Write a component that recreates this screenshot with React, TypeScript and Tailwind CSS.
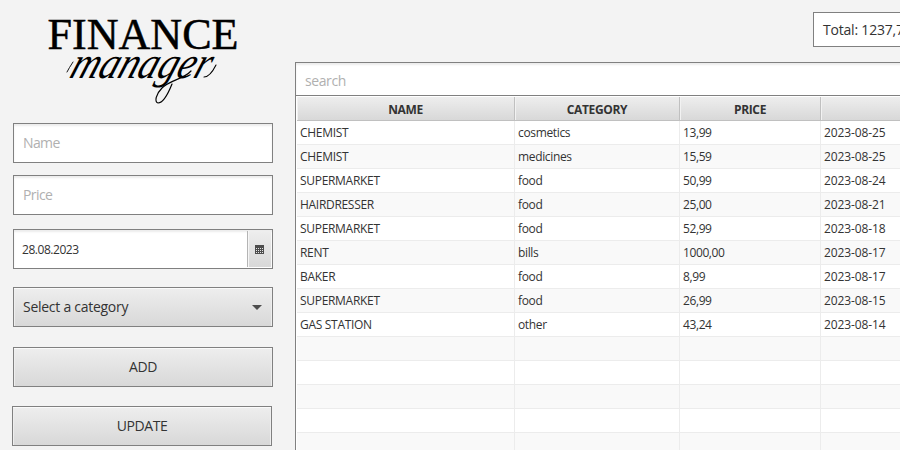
import type { ReactNode } from "react";

const rows = [
  ["CHEMIST", "cosmetics", "13,99", "2023-08-25"],
  ["CHEMIST", "medicines", "15,59", "2023-08-25"],
  ["SUPERMARKET", "food", "50,99", "2023-08-24"],
  ["HAIRDRESSER", "food", "25,00", "2023-08-21"],
  ["SUPERMARKET", "food", "52,99", "2023-08-18"],
  ["RENT", "bills", "1000,00", "2023-08-17"],
  ["BAKER", "food", "8,99", "2023-08-17"],
  ["SUPERMARKET", "food", "26,99", "2023-08-15"],
  ["GAS STATION", "other", "43,24", "2023-08-14"],
  ["", "", "", ""],
  ["", "", "", ""],
  ["", "", "", ""],
  ["", "", "", ""],
  ["", "", "", ""],
];

const grid = "grid grid-cols-[218px_165px_141px_218px]";
const inputBox =
  "flex h-10 w-[260px] items-center border border-[#808080] bg-white px-[9px] pb-0.5 text-[14px] tracking-[-0.6px] text-[#b0b0b0] shadow-[inset_0_2px_2px_#ededed]";
const buttonFace =
  "border border-[#808080] bg-gradient-to-b from-[#eeeeee] to-[#d8d8d8] shadow-[inset_0_1px_0_#fafafa,inset_1px_0_0_#eeeeee,inset_-1px_0_0_#eeeeee]";

function Logo() {
  return (
    <svg className="ml-[35px] block h-[111px] w-[190px]" viewBox="48 0 190 111" overflow="visible">
      <text x="47.5" y="49" fontSize="44" textLength="191" lengthAdjust="spacingAndGlyphs" fontFamily="'Liberation Serif', serif" stroke="#000" strokeWidth="0.5">
        FINANCE
      </text>
      <g transform="translate(68 78) skewX(-20)">
        <text x="0" y="0" fontSize="45" textLength="139" lengthAdjust="spacingAndGlyphs" fontFamily="'Liberation Serif', serif" fontStyle="italic">
          manager
        </text>
      </g>
      {/* Hairline swashes around the script line */}
      <g fill="none" stroke="#000" strokeLinecap="round">
        <path d="M67 72q2-4 6-10" strokeWidth="0.9" />
        <path d="M172 84C168 94 163 103 158 103C154 102 156 94 162 88C170 80 184 79 191 71" strokeWidth="1.2" />
        <path d="M204 77C209 77 213 71 216 65" strokeWidth="1.1" />
      </g>
    </svg>
  );
}

function CalendarIcon() {
  return (
    <svg className="h-[9px] w-[9px]" viewBox="0 0 9 9" shapeRendering="crispEdges">
      <rect width="9" height="9" fill="#4d4d4d" />
      {[3, 5, 7].map((y) =>
        [1, 3, 5, 7].map((x) => <rect key={`${x}-${y}`} x={x} y={y} width="1" height="1" fill="#e4e4e4" />)
      )}
    </svg>
  );
}

function Button({ children }: { children: ReactNode }) {
  return (
    <button className={`${buttonFace} flex h-10 w-[260px] items-center justify-center pb-0.5 text-[14px] tracking-[-0.4px] text-[#333]`}>
      {children}
    </button>
  );
}

function Sidebar() {
  return (
    <aside className="flex w-[295px] shrink-0 flex-col pl-[13px]">
      <div className="h-[123px]">
        <Logo />
      </div>
      <div className={inputBox}>Name</div>
      <div className={`${inputBox} mt-3`}>Price</div>
      <div className="mt-3.5 flex h-10 w-[260px] border border-[#808080] bg-white text-[12px] tracking-[-0.45px] text-[#333] shadow-[inset_0_2px_2px_#ededed]">
        <div className="flex flex-1 items-center pl-2 pt-0.5">28.08.2023</div>
        <div className="my-px mr-px flex w-6 items-center justify-center border-l border-[#b4b4b4] bg-gradient-to-b from-[#eeeeee] to-[#d8d8d8] shadow-[inset_1px_0_0_#f6f6f6]">
          <CalendarIcon />
        </div>
      </div>
      <div className={`${buttonFace} mt-[18px] flex h-10 w-[260px] items-center justify-between pl-[9px] pr-[10px] text-[14px] tracking-[-0.27px] text-[#333]`}>
        <span className="pb-0.5">Select a category</span>
        <svg className="h-[5px] w-[10px]" viewBox="0 0 10 5">
          <path d="M0 0h10L5 5z" fill="#4d4d4d" />
        </svg>
      </div>
      <div className="mt-5">
        <Button>ADD</Button>
      </div>
      <div className="-ml-px mt-[19px]">
        <Button>UPDATE</Button>
      </div>
    </aside>
  );
}

function Table() {
  return (
    <div className="bg-white pl-px">
      <div className={`${grid} h-[25px] border-b border-t border-b-[#c0c0c0] border-t-white text-[12px] font-bold tracking-[-0.35px] text-[#333]`}>
        {["NAME", "CATEGORY", "PRICE", "DATE"].map((title) => (
          <div key={title} className="flex items-center justify-center border-r border-[#c0c0c0] bg-gradient-to-b from-[#eeeeee] to-[#d8d8d8] pt-0.5 shadow-[inset_1px_0_0_#f2f2f2]">
            {title}
          </div>
        ))}
      </div>
      {rows.map(([name, category, price, date], i) => (
        <div key={i} className={`${grid} h-6 text-[12px] leading-[23px] text-[#333] ${i % 2 ? "bg-[#f9f9f9]" : "bg-white"} *:border-b *:border-r *:border-[#ececec] *:pl-[3px]`}>
          <div className="tracking-[-0.3px]">{name}</div>
          <div className="tracking-[-0.35px]">{category}</div>
          <div className="tracking-[-0.4px]">{price}</div>
          <div className="tracking-[-0.1px]">{date}</div>
        </div>
      ))}
    </div>
  );
}

export default function App() {
  return (
    <div className="flex h-[450px] w-[900px] overflow-hidden bg-[#f3f3f3] font-['Open_Sans','Noto_Sans',sans-serif]">
      <Sidebar />
      <main className="w-[744px] shrink-0">
        <div className="flex h-[62px] justify-end pt-3">
          <div className="flex h-[35px] w-[226px] items-center whitespace-nowrap border border-[#808080] bg-white pl-[9px] text-[14px] tracking-[-0.2px] text-[#333]">
            Total: 1237,74
          </div>
        </div>
        <div className="border border-[#808080]">
          <div className="flex h-[33px] items-center border-b border-[#808080] bg-white pl-[9px] pt-0.5 text-[14px] tracking-[-0.4px] text-[#b0b0b0] shadow-[inset_0_2px_2px_#ededed]">
            search
          </div>
          <Table />
        </div>
      </main>
    </div>
  );
}
